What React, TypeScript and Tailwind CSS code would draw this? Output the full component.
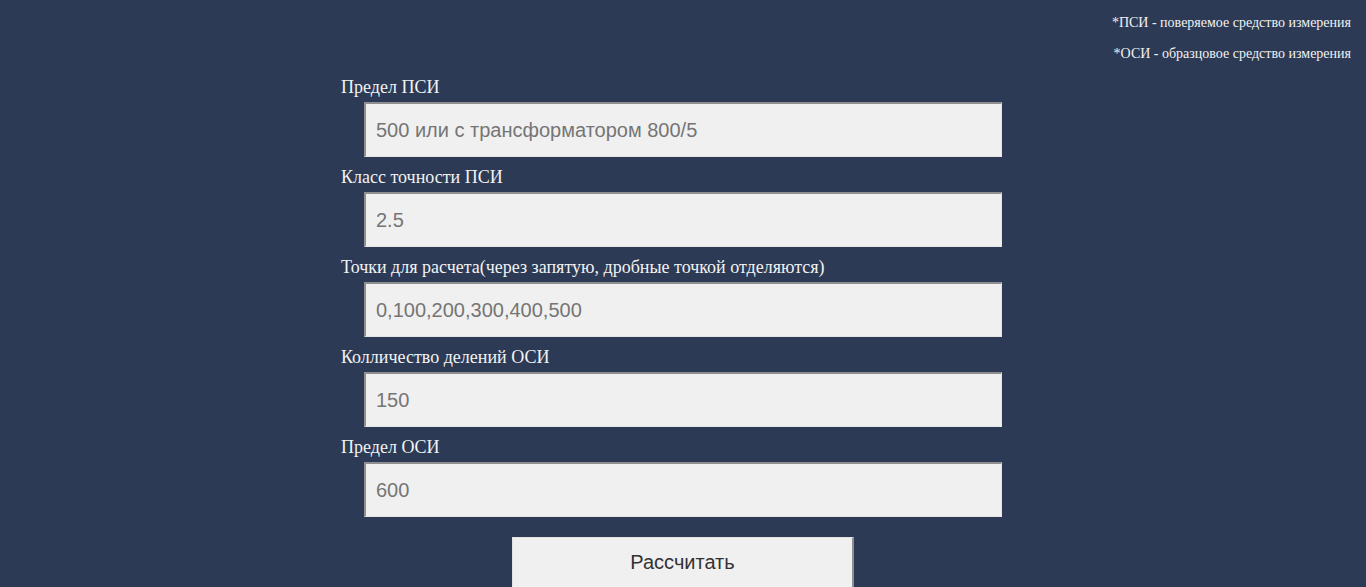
const fields = [
  { label: 'Предел ПСИ', placeholder: '500 или с трансформатором 800/5' },
  { label: 'Класс точности ПСИ', placeholder: '2.5' },
  { label: 'Точки для расчета(через запятую, дробные точкой отделяются)', placeholder: '0,100,200,300,400,500' },
  { label: 'Колличество делений ОСИ', placeholder: '150' },
  { label: 'Предел ОСИ', placeholder: '600' },
];

export default function App() {
  return (
    <div className="h-[587px] bg-[#2c3a55] overflow-hidden font-['Liberation_Serif',serif] text-[#f2f2f2]">
      {/* notes */}
      <div className="flex flex-col items-end pr-[15px] pt-[15px] text-[14px] leading-[16px] gap-[15px]">
        <p>*ПСИ - поверяемое средство измерения</p>
        <p>*ОСИ - образцовое средство измерения</p>
      </div>

      <div className="mx-auto w-[684px] mt-[15px]">
        {fields.map((f) => (
          <div key={f.label} className="mb-[10px]">
            <label className="block text-[18px] leading-[21px] mb-[4px]">{f.label}</label>
            <input
              type="text"
              placeholder={f.placeholder}
              className="ml-[23px] w-[638px] h-[55px] bg-[#f0f0f0] border-t-2 border-l-2 border-b border-r border-t-[#8f8f8f] border-l-[#8f8f8f] border-b-[#e6e6e6] border-r-[#e6e6e6] px-[10px] font-['Liberation_Sans',Arial,sans-serif] text-[20px] text-[#333] placeholder:text-[#757575] outline-none"
            />
          </div>
        ))}
        <div className="flex justify-center pt-[10px]">
          <button className="w-[342px] h-[53px] pb-[2px] bg-[#f0f0f0] border-t border-l border-b-2 border-r-2 border-t-[#e3e3e3] border-l-[#e3e3e3] border-b-[#8f8f8f] border-r-[#8f8f8f] font-['Liberation_Sans',Arial,sans-serif] text-[20px] text-[#333]">
            Рассчитать
          </button>
        </div>
      </div>
    </div>
  );
}
